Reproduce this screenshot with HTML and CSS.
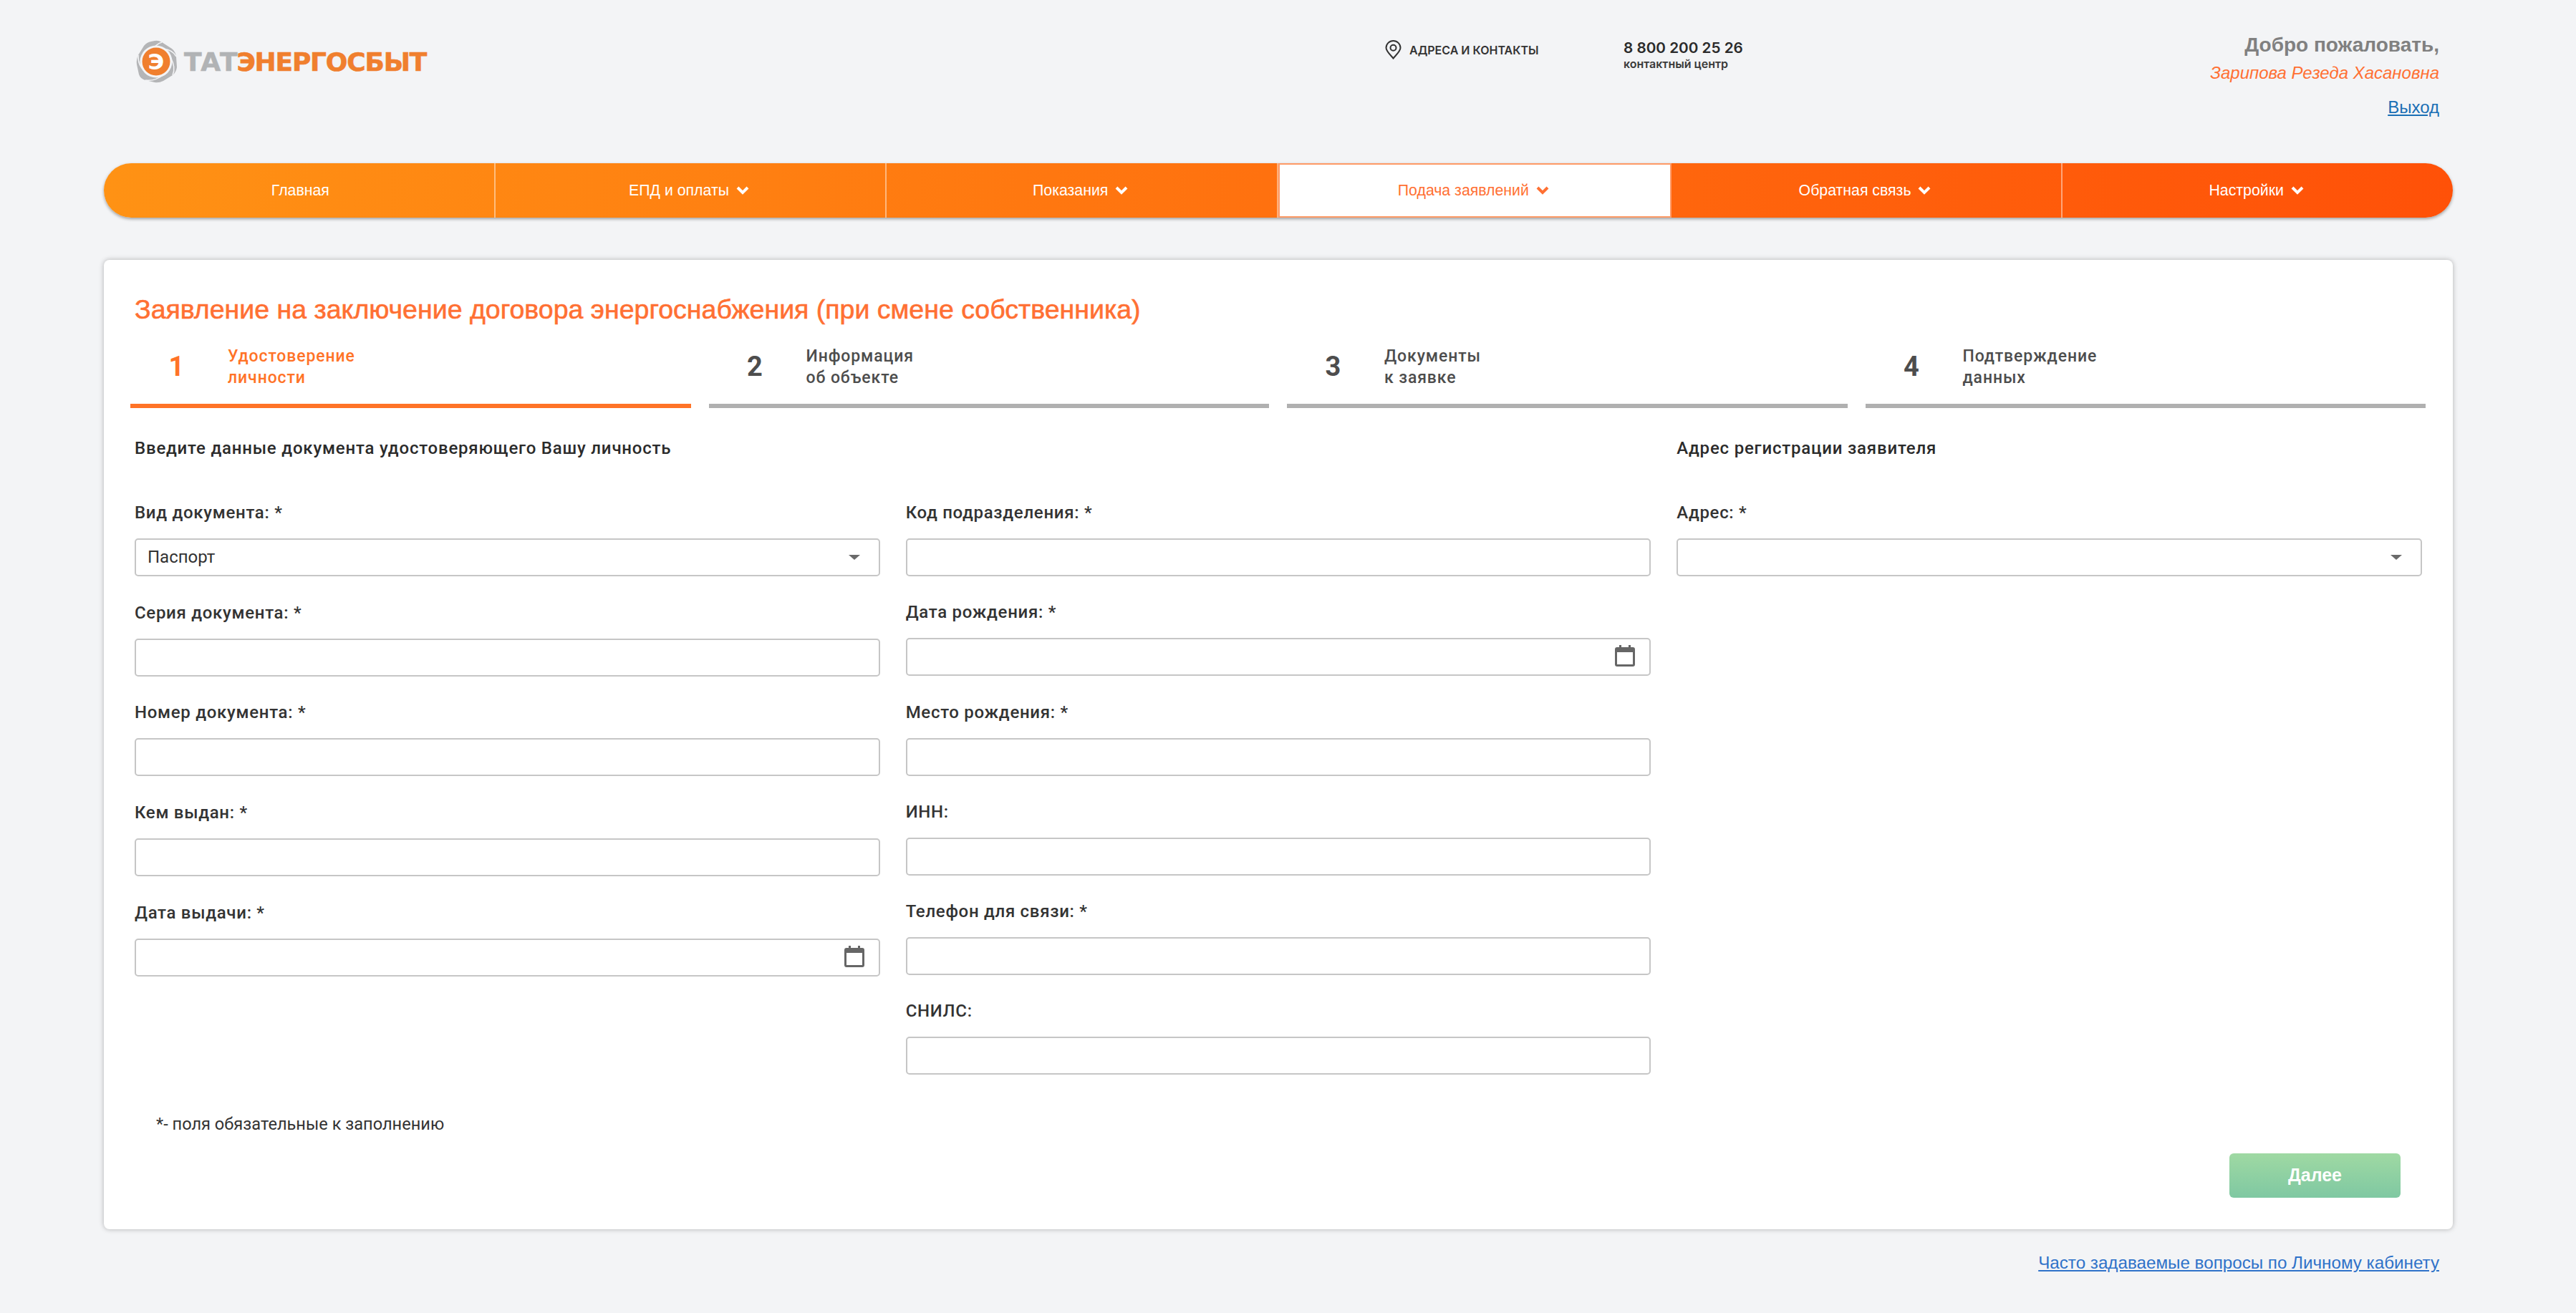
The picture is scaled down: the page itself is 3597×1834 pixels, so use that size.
FILE: index.html
```html
<!DOCTYPE html>
<html lang="ru">
<head>
    <meta charset="UTF-8">
    <title>Заявление на заключение договора энергоснабжения</title>
    <link rel="stylesheet" href="styles.css">
</head>
<body>
    <div class="page">
        <header class="header">
            <a class="logo">
                <svg class="logo-mark" width="58" height="60" viewBox="0 0 58 60">
                    <path d="M26 1 Q31 0 36 3 L50 12 Q55 16 56 23 L57 38 Q56 45 51 49 L38 57 Q32 60 26 59 L13 56 Q6 54 4 48 L1 34 Q0 27 3 21 L11 8 Q15 3 21 2 Z" fill="#b4b5b7"/>
                    <path d="M36 3 Q28 5 20 17 M56 23 Q52 14 38 12 M51 49 Q56 38 48 24 M13 56 Q26 58 39 48 M3 21 Q2 36 14 45" fill="none" stroke="#f3f4f6" stroke-width="1.5"/>
                    <circle cx="28" cy="30" r="22.5" fill="#f3f4f6"/>
                    <circle cx="28" cy="30" r="19.5" fill="#f07f2e"/>
                    <text x="28" y="41" class="logo-letter" text-anchor="middle">Э</text>
                </svg>
                <span class="logo-text"><span class="logo-grey">ТАТ</span>ЭНЕРГОСБЫТ</span>
            </a>
            <a class="contacts">
                <svg width="23" height="27" viewBox="0 0 23 27">
                    <path d="M11.5 25.5 C7 20 1.5 15.5 1.5 10.8 A10 9.8 0 0 1 21.5 10.8 C21.5 15.5 16 20 11.5 25.5 Z" fill="none" stroke="#333" stroke-width="2"/>
                    <circle cx="11.5" cy="10.8" r="4" fill="none" stroke="#333" stroke-width="2"/>
                </svg>
                <span>АДРЕСА И КОНТАКТЫ</span>
            </a>
            <div class="phone">
                <div class="phone-number">8 800 200 25 26</div>
                <div class="phone-note">контактный центр</div>
            </div>
            <div class="user">
                <div class="user-hello">Добро пожаловать,</div>
                <div class="user-name">Зарипова Резеда Хасановна</div>
                <a class="user-exit" href="#">Выход</a>
            </div>
        </header>

        <nav class="menu">
            <a class="menu-item">Главная</a>
            <a class="menu-item">ЕПД и оплаты <svg class="chevron" viewBox="0 0 18 12"><path d="M2 2 L9 9 L16 2"/></svg></a>
            <a class="menu-item">Показания <svg class="chevron" viewBox="0 0 18 12"><path d="M2 2 L9 9 L16 2"/></svg></a>
            <a class="menu-item active">Подача заявлений <svg class="chevron" viewBox="0 0 18 12"><path d="M2 2 L9 9 L16 2"/></svg></a>
            <a class="menu-item">Обратная связь <svg class="chevron" viewBox="0 0 18 12"><path d="M2 2 L9 9 L16 2"/></svg></a>
            <a class="menu-item">Настройки <svg class="chevron" viewBox="0 0 18 12"><path d="M2 2 L9 9 L16 2"/></svg></a>
        </nav>

        <main class="card">
            <h1 class="title">Заявление на заключение договора энергоснабжения (при смене собственника)</h1>

            <div class="steps">
                <div class="step current"><span class="step-num">1</span><span class="step-text">Удостоверение<br>личности</span></div>
                <div class="step"><span class="step-num">2</span><span class="step-text">Информация<br>об объекте</span></div>
                <div class="step"><span class="step-num">3</span><span class="step-text">Документы<br>к заявке</span></div>
                <div class="step"><span class="step-num">4</span><span class="step-text">Подтверждение<br>данных</span></div>
            </div>

            <div class="form">
                <div class="column">
                    <h2 class="column-title">Введите данные документа удостоверяющего Вашу личность</h2>
                    <div class="field">
                        <label>Вид документа: *</label>
                        <div class="control"><div class="input select">Паспорт</div><span class="caret"></span></div>
                    </div>
                    <div class="field">
                        <label>Серия документа: *</label>
                        <div class="control"><input class="input" type="text"></div>
                    </div>
                    <div class="field">
                        <label>Номер документа: *</label>
                        <div class="control"><input class="input" type="text"></div>
                    </div>
                    <div class="field">
                        <label>Кем выдан: *</label>
                        <div class="control"><input class="input" type="text"></div>
                    </div>
                    <div class="field">
                        <label>Дата выдачи: *</label>
                        <div class="control">
                            <input class="input" type="text">
                            <svg class="calendar" viewBox="0 0 28 30"><path d="M6 0h3v3h10V0h3v3h3a3 3 0 0 1 3 3v21a3 3 0 0 1-3 3H3a3 3 0 0 1-3-3V6a3 3 0 0 1 3-3h3z M3 10v17h22V10z" fill-rule="evenodd"/></svg>
                        </div>
                    </div>
                </div>

                <div class="column narrow">
                    <h2 class="column-title">&nbsp;</h2>
                    <div class="field">
                        <label>Код подразделения: *</label>
                        <div class="control"><input class="input" type="text"></div>
                    </div>
                    <div class="field">
                        <label>Дата рождения: *</label>
                        <div class="control">
                            <input class="input" type="text">
                            <svg class="calendar" viewBox="0 0 28 30"><path d="M6 0h3v3h10V0h3v3h3a3 3 0 0 1 3 3v21a3 3 0 0 1-3 3H3a3 3 0 0 1-3-3V6a3 3 0 0 1 3-3h3z M3 10v17h22V10z" fill-rule="evenodd"/></svg>
                        </div>
                    </div>
                    <div class="field">
                        <label>Место рождения: *</label>
                        <div class="control"><input class="input" type="text"></div>
                    </div>
                    <div class="field">
                        <label>ИНН:</label>
                        <div class="control"><input class="input" type="text"></div>
                    </div>
                    <div class="field">
                        <label>Телефон для связи: *</label>
                        <div class="control"><input class="input" type="text"></div>
                    </div>
                    <div class="field">
                        <label>СНИЛС:</label>
                        <div class="control"><input class="input" type="text"></div>
                    </div>
                </div>

                <div class="column">
                    <h2 class="column-title">Адрес регистрации заявителя</h2>
                    <div class="field">
                        <label>Адрес: *</label>
                        <div class="control"><div class="input select"></div><span class="caret"></span></div>
                    </div>
                </div>
            </div>

            <p class="note">*- поля обязательные к заполнению</p>

            <div class="actions">
                <button class="next-btn">Далее</button>
            </div>
        </main>

        <div class="faq">
            <a href="#">Часто задаваемые вопросы по Личному кабинету</a>
        </div>
    </div>
</body>
</html>
```

FILE: styles.css
```css
* {
    box-sizing: border-box;
}
body {
    margin: 0;
    background-color: #f3f4f6;
    font-family: "Liberation Sans", Arial, sans-serif;
    overflow: hidden;
}
.page {
    width: 3280px;
    margin-left: 145px;
}

/* header */
.header {
    display: flex;
    height: 228px;
    align-items: flex-start;
}
.logo {
    display: flex;
    align-items: center;
    margin: 56px 0 0 45px;
    width: 405px;
}
.logo-mark {
    flex: none;
}
.logo-letter {
    font-family: "DejaVu Sans", sans-serif;
    font-weight: bold;
    font-size: 31px;
    fill: #fff;
}
.logo-text {
    margin-left: 9px;
    font-family: "DejaVu Sans", sans-serif;
    font-weight: bold;
    font-size: 36px;
    letter-spacing: -1.2px;
    color: #f07f2e;
    white-space: nowrap;
    -webkit-text-stroke: 0.6px currentColor;
}
.logo-grey {
    color: #b1b3b5;
}
.contacts {
    display: flex;
    align-items: center;
    gap: 11px;
    margin: 56px 0 0 1339px;
    width: 333px;
    font-family: Inter, sans-serif;
    font-weight: 600;
    font-size: 16px;
    color: #333;
    white-space: nowrap;
}
.phone {
    margin-top: 54px;
    font-family: Inter, sans-serif;
    font-weight: 600;
    color: #2b2b2b;
    white-space: nowrap;
}
.phone-number {
    font-size: 20.7px;
    line-height: 26px;
}
.phone-note {
    font-size: 16px;
    line-height: 18px;
    color: #3a3a3a;
}
.user {
    margin-left: auto;
    margin-right: 19px;
    padding-top: 46px;
    text-align: right;
}
.user-hello {
    font-size: 28px;
    line-height: 34px;
    font-weight: bold;
    color: #808080;
}
.user-name {
    margin-top: 6px;
    font-size: 24px;
    line-height: 32px;
    font-style: italic;
    color: #ff7033;
}
.user-exit {
    display: inline-block;
    margin-top: 16px;
    font-size: 24px;
    line-height: 32px;
    color: #1a6fb5;
}

/* menu */
.menu {
    display: flex;
    height: 76px;
    border-radius: 38px;
    background: linear-gradient(90deg, #ff9214 0%, #ff6a0e 60%, #ff5108 100%);
    box-shadow: 0 2px 4px rgba(0, 0, 0, 0.35);
}
.menu-item {
    flex: 1;
    display: flex;
    align-items: center;
    justify-content: center;
    gap: 10px;
    padding-right: 4px;
    font-size: 21.3px;
    color: #fff;
    border-right: 2px solid rgba(255, 255, 255, 0.45);
}
.menu-item:first-child {
    padding-right: 0;
    padding-left: 4px;
}
.menu-item:last-child {
    border-right: none;
}
.menu-item.active {
    background-color: #fff;
    color: #ff7033;
    border: 2px solid #ff9a66;
}
.chevron {
    width: 18px;
    height: 12px;
    fill: none;
    stroke: #fff;
    stroke-width: 4;
}
.active .chevron {
    stroke: #ff7033;
}

/* card */
.card {
    height: 1354px;
    margin-top: 59px;
    padding: 48px 43px 0 43px;
    background-color: #fff;
    border-radius: 8px;
    box-shadow: 0 0 7px rgba(0, 0, 0, 0.28);
}
.title {
    margin: 0;
    font-size: 37.5px;
    line-height: 42px;
    font-weight: normal;
    color: #ff7033;
    -webkit-text-stroke: 0.6px #ff7033;
}
.steps {
    display: flex;
    gap: 25px;
    margin: 16px -5px 0 -6px;
}
.step {
    flex: 1;
    display: flex;
    align-items: center;
    height: 101px;
    padding-bottom: 10px;
    border-bottom: 6px solid #b0b0b0;
    color: #4d4d4d;
    font-family: Roboto, sans-serif;
}
.step.current {
    border-bottom-color: #ff7327;
    color: #ff7327;
}
.step-num {
    width: 136px;
    padding-right: 7px;
    text-align: center;
    font-size: 38px;
    font-weight: bold;
}
.step-text {
    padding-top: 3px;
    font-size: 23px;
    line-height: 30px;
    font-weight: 500;
    letter-spacing: 0.9px;
}

/* form */
.form {
    display: grid;
    grid-template-columns: repeat(3, 1fr);
    gap: 36px;
    margin-top: 42px;
}
.column-title {
    margin: 0 0 58px;
    font-family: Roboto, sans-serif;
    font-size: 24px;
    line-height: 28px;
    font-weight: 500;
    letter-spacing: 0.8px;
    color: #2b2b2b;
}
.field {
    height: 139.7px;
}
.narrow .field {
    height: 139.3px;
}
.field label {
    display: block;
    height: 54px;
    padding-top: 4px;
    font-family: Roboto, sans-serif;
    font-size: 24px;
    line-height: 28px;
    font-weight: 500;
    letter-spacing: 0.7px;
    color: #333;
}
.control {
    position: relative;
}
.input {
    display: block;
    width: 100%;
    height: 53px;
    padding: 0 16px;
    background-color: #fff;
    border: 2px solid #c6c6c6;
    border-radius: 5px;
    font-family: Roboto, sans-serif;
    font-size: 24px;
    line-height: 49px;
    color: #333;
}
.caret {
    position: absolute;
    right: 28px;
    top: 23px;
    border-left: 8px solid transparent;
    border-right: 8px solid transparent;
    border-top: 7px solid #6a6a6a;
}
.calendar {
    position: absolute;
    right: 22px;
    top: 10px;
    width: 28px;
    height: 30px;
    fill: #666;
}
.note {
    margin: 21px 0 0;
    padding-left: 30px;
    font-family: Roboto, sans-serif;
    font-size: 23.6px;
    line-height: 30px;
    color: #333;
}
.actions {
    display: flex;
    justify-content: flex-end;
    margin-top: 26px;
    padding-right: 30px;
}
.next-btn {
    width: 239px;
    height: 62px;
    border: none;
    border-radius: 6px;
    background: linear-gradient(180deg, #9fd9a3 0%, #7fc8a2 100%);
    color: #fff;
    font-family: "Liberation Sans", Arial, sans-serif;
    font-size: 25px;
    font-weight: bold;
}

/* footer link */
.faq {
    margin-top: 31px;
    padding-right: 19px;
    text-align: right;
    font-size: 24.2px;
    line-height: 32px;
}
.faq a {
    color: #2f72c9;
}
```
